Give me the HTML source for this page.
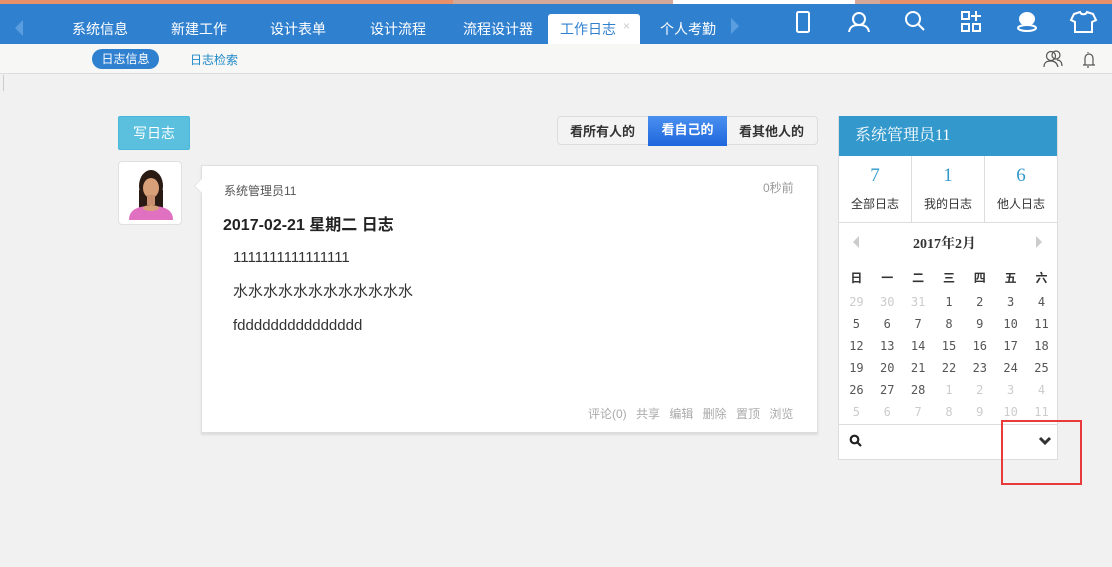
<!DOCTYPE html>
<html><head><meta charset="utf-8"><style>
*{box-sizing:border-box;margin:0;padding:0}
body{width:1112px;height:567px;overflow:hidden;background:#f1f1f1;font-family:"Liberation Sans","Noto Sans CJK SC",sans-serif;position:relative;font-size:13px;color:#333}
.a{position:absolute}
.top{left:0;top:0;width:1112px;height:4px;background:#e8906a}
.nav{left:0;top:4px;width:1112px;height:40px;background:#3080d0}
.nav .t{position:absolute;top:15px;color:#fff;font-size:14px}
.sub{left:0;top:44px;width:1112px;height:30px;background:#f7f7f5;border-bottom:1px solid #ddd}
.cal td{text-align:center;height:22px;font-size:12px;color:#555;font-family:"DejaVu Sans Mono",monospace}
.cal td.g{color:#ccc}
.cal th{font-size:12px;height:28px;color:#333;font-family:"Noto Sans CJK SC",sans-serif}
</style></head><body>
<div class="a top"></div>
<div class="a" style="left:453px;top:0;width:220px;height:4px;background:#d4a898"></div>
<div class="a" style="left:673px;top:0;width:182px;height:4px;background:#fff"></div>
<div class="a" style="left:855px;top:0;width:25px;height:4px;background:#d4a898"></div>
<div class="a nav">
<div class="a" style="left:15px;top:16px;width:0;height:0;border-top:8px solid transparent;border-bottom:8px solid transparent;border-right:8px solid #5a9ee0"></div>
<span class="t" style="left:72px">系统信息</span>
<span class="t" style="left:171px">新建工作</span>
<span class="t" style="left:270px">设计表单</span>
<span class="t" style="left:370px">设计流程</span>
<span class="t" style="left:463px">流程设计器</span>
<div class="a" style="left:548px;top:10px;width:92px;height:30px;background:#fff;border-radius:3px 3px 0 0"></div>
<span class="t" style="left:560px;color:#3080d0">工作日志</span>
<span class="t" style="left:623px;color:#ccc;font-size:12px">×</span>
<span class="t" style="left:660px">个人考勤</span>
<div class="a" style="left:731px;top:14px;width:0;height:0;border-top:8px solid transparent;border-bottom:8px solid transparent;border-left:8px solid #5a9ee0"></div>
<svg class="a" style="left:780px;top:6px" width="330" height="28" fill="none" stroke="#fff" stroke-width="2">
<rect x="17" y="2" width="12" height="20" rx="1.5"/>
<circle cx="79" cy="9" r="6"/><path d="M69 22c1-6 5-7 10-7s9 1 10 7"/>
<circle cx="133" cy="9" r="7"/><path d="M138 14l6 6"/>
<rect x="182" y="2" width="7" height="7" stroke-width="2"/><rect x="182" y="14" width="7" height="7"/><rect x="193" y="14" width="7" height="7"/><path d="M196 1v10M191 6h10"/>
<ellipse cx="247" cy="9" rx="7" ry="6" fill="#fff"/><ellipse cx="247" cy="18" rx="9" ry="3"/>
<path d="M294 4l6-2c1 3 6 3 7 0l6 2 3 6-4 2v10h-17v-10l-4-2z"/>
</svg>
</div>
<div class="a sub">
<div class="a" style="left:92px;top:5px;width:67px;height:20px;background:#3080d0;border-radius:10px;color:#fff;font-size:12px;text-align:center;line-height:20px">日志信息</div>
<span class="a" style="left:190px;top:7px;color:#1e88c8;font-size:12px">日志检索</span>
<svg class="a" style="left:1042px;top:5px" width="60" height="20" fill="none" stroke="#555" stroke-width="1.2">
<circle cx="9" cy="7" r="4.5"/><path d="M2 18c0-5 3-6 7-6s6 2 7 6"/><circle cx="14" cy="6" r="4"/><path d="M15 11c3 0 5 2 5 6"/>
<path d="M41 16h12M43 16v-7a4 4 0 0 1 8 0v7M46 3v1M45 18h2"/>
</svg>
</div>
<div class="a" style="left:3px;top:75px;width:1px;height:16px;background:#ccc"></div>

<div class="a" style="left:118px;top:116px;width:72px;height:34px;background:#5bc0de;border:1px solid #46b8da;color:#fff;font-size:14px;text-align:center;line-height:32px;border-radius:2px">写日志</div>

<div class="a" style="left:557px;top:116px;width:261px;height:29px;border:1px solid #ddd;border-radius:4px;background:#f3f3f3;font-weight:bold;font-size:13px;color:#333">
<span class="a" style="left:12px;top:4px">看所有人的</span>
<div class="a" style="left:90px;top:-1px;width:79px;height:30px;background:linear-gradient(#4a90f0,#1e66dc);color:#fff;text-align:center;line-height:27px">看自己的</div>
<span class="a" style="left:181px;top:4px">看其他人的</span>
</div>

<div class="a" style="left:118px;top:161px;width:64px;height:64px;background:#fff;border:1px solid #e0e0e0;border-radius:4px;overflow:hidden">
<svg width="64" height="64"><ellipse cx="32" cy="24" rx="12" ry="16" fill="#2a1a14"/><path d="M20 28v20h24V28z" fill="#2a1a14"/><ellipse cx="32" cy="26" rx="8" ry="10" fill="#d8a078"/><rect x="28" y="33" width="8" height="10" fill="#c89070"/><path d="M10 58c0-10 8-14 22-14s22 4 22 14z" fill="#e070c0"/><ellipse cx="32" cy="46" rx="8" ry="3" fill="#d8a078"/></svg>
</div>

<div class="a" style="left:201px;top:165px;width:617px;height:269px;background:#fff;border:1px solid #e0e0e0;border-bottom:2px solid #ddd;box-shadow:0 1px 2px #ddd"></div>
<div class="a" style="left:194px;top:178px;width:0;height:0;border-top:8px solid transparent;border-bottom:8px solid transparent;border-right:8px solid #e0e0e0"></div>
<div class="a" style="left:195px;top:179px;width:0;height:0;border-top:7px solid transparent;border-bottom:7px solid transparent;border-right:7px solid #fff"></div>
<span class="a" style="left:224px;top:182px;font-size:12px;color:#555">系统管理员11</span>
<span class="a" style="left:763px;top:179px;font-size:12px;color:#999">0秒前</span>
<span class="a" style="left:223px;top:211px;font-size:16px;font-weight:bold;color:#222">2017-02-21 星期二 日志</span>
<span class="a" style="left:233px;top:249px;font-size:15px;color:#333">1111111111111111</span>
<span class="a" style="left:233px;top:280px;font-size:15px;color:#333">水水水水水水水水水水水水</span>
<span class="a" style="left:233px;top:317px;font-size:15px;color:#333">fddddddddddddddd</span>
<span class="a" style="left:588px;top:405px;font-size:12px;color:#aaa;word-spacing:6px">评论(0) 共享 编辑 删除 置顶 浏览</span>

<div class="a" style="left:838px;top:116px;width:220px;height:344px;background:#fff;border:1px solid #ddd"></div>
<div class="a" style="left:839px;top:116px;width:218px;height:40px;background:#3399cc;color:#fff;font-size:16px;line-height:40px;padding-left:16px;font-family:'Liberation Serif','Noto Serif CJK SC',serif">系统管理员11</div>
<div class="a" style="left:839px;top:156px;width:218px;height:67px;border-bottom:1px solid #ddd;display:flex">
<div style="flex:1;text-align:center;border-right:1px solid #ddd"><div style="color:#3399cc;font-size:19px;margin-top:9px;font-family:'Liberation Serif',serif">7</div><div style="font-size:12px;margin-top:8px">全部日志</div></div>
<div style="flex:1;text-align:center;border-right:1px solid #ddd"><div style="color:#3399cc;font-size:19px;margin-top:9px;font-family:'Liberation Serif',serif">1</div><div style="font-size:12px;margin-top:8px">我的日志</div></div>
<div style="flex:1;text-align:center"><div style="color:#3399cc;font-size:19px;margin-top:9px;font-family:'Liberation Serif',serif">6</div><div style="font-size:12px;margin-top:8px">他人日志</div></div>
</div>
<div class="a" style="left:853px;top:236px;width:0;height:0;border-top:6px solid transparent;border-bottom:6px solid transparent;border-right:6px solid #ccc"></div>
<div class="a" style="left:1036px;top:236px;width:0;height:0;border-top:6px solid transparent;border-bottom:6px solid transparent;border-left:6px solid #ccc"></div>
<span class="a" style="left:913px;top:233px;font-size:14px;font-weight:bold;font-family:'Liberation Serif','Noto Serif CJK SC',serif">2017年2月</span>
<table class="a cal" style="left:841px;top:263px;width:216px;border-collapse:collapse">
<tr><th>日</th><th>一</th><th>二</th><th>三</th><th>四</th><th>五</th><th>六</th></tr>
<tr><td class="g">29</td><td class="g">30</td><td class="g">31</td><td>1</td><td>2</td><td>3</td><td>4</td></tr>
<tr><td>5</td><td>6</td><td>7</td><td>8</td><td>9</td><td>10</td><td>11</td></tr>
<tr><td>12</td><td>13</td><td>14</td><td>15</td><td>16</td><td>17</td><td>18</td></tr>
<tr><td>19</td><td>20</td><td>21</td><td>22</td><td>23</td><td>24</td><td>25</td></tr>
<tr><td>26</td><td>27</td><td>28</td><td class="g">1</td><td class="g">2</td><td class="g">3</td><td class="g">4</td></tr>
<tr><td class="g">5</td><td class="g">6</td><td class="g">7</td><td class="g">8</td><td class="g">9</td><td class="g">10</td><td class="g">11</td></tr>
</table>
<div class="a" style="left:839px;top:424px;width:218px;height:1px;background:#ddd"></div>
<svg class="a" style="left:849px;top:434px" width="14" height="14" fill="none" stroke="#222" stroke-width="2.2"><circle cx="5.5" cy="5.5" r="3.8"/><path d="M8.5 8.5l3.5 3.5"/></svg>
<svg class="a" style="left:1038px;top:436px" width="14" height="10" fill="none" stroke="#333" stroke-width="3"><path d="M2 2l5 5 5-5"/></svg>
<div class="a" style="left:1001px;top:420px;width:81px;height:65px;border:2px solid #e83a3a"></div>
</body></html>
